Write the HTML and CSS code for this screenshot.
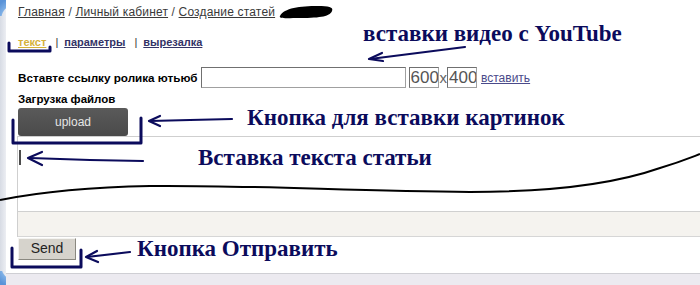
FILE: index.html
```html
<!DOCTYPE html>
<html lang="ru">
<head>
<meta charset="utf-8">
<title>Создание статей</title>
<link rel="stylesheet" href="styles.css">
</head>
<body>
<div class="page">
  <div class="edge"></div>
  <div class="main">
    <div class="content">
      <div class="crumbs"><a href="#">Главная</a> / <a href="#">Личный кабинет</a> / <a href="#">Создание статей</a> <span class="blot"></span></div>
      <div class="tabs"><a class="tab active" href="#">текст</a><span class="sep">|</span><a class="tab" href="#">параметры</a><span class="sep">|</span><a class="tab" href="#">вырезалка</a></div>
      <div class="yt-row">
        <span class="label yt-label">Вставте ссылку ролика ютьюб</span>
        <span class="field url"></span>
        <span class="field size">600</span><span class="x">x</span><span class="field size">400</span>
        <a class="insert" href="#">вставить</a>
      </div>
      <div class="label upl-label">Загрузка файлов</div>
      <div class="upload">upload</div>
    </div>
    <div class="editor">
      <div class="editor-body"></div>
      <div class="editor-bar"></div>
    </div>
    <div class="content send-row">
      <div class="send">Send</div>
    </div>
    <div class="footer"></div>
  </div>
</div>

<div class="note note-video">вставки видео с YouTube</div>
<div class="note note-upload">Кнопка для вставки картинок</div>
<div class="note note-text">Вставка текста статьи</div>
<div class="note note-send">Кнопка Отправить</div>

<svg class="marks" width="700" height="285" viewBox="0 0 700 285">
  <path d="M280 16 C284 8 300 6 318 6 C328 6 334 7 332 11 C330 16 322 18 300 18 C288 18 278 19 280 16 Z" fill="#000"/>
  <g fill="none" stroke="#0b0b5c" stroke-width="3" stroke-linecap="round" stroke-linejoin="round">
    <path d="M9 43 V51 H50 V47"/>
    <path d="M13 120 V143 H141 V118"/>
    <path d="M12 248 V267 H81 V250"/>
  </g>
  <g fill="none" stroke="#0b0b5c" stroke-width="2.2" stroke-linecap="round" stroke-linejoin="round">
    <path d="M465 47 L370 59"/>
    <path d="M382 53 L369 59 L383 61"/>
    <path d="M232 119 L190 120 L150 121"/>
    <path d="M160 116 L149 121 L160 126"/>
    <path d="M143 161 L90 160 L30 158"/>
    <path d="M42 152 L28 158 L42 165"/>
    <path d="M130 252 L87 257"/>
    <path d="M97 251 L86 257 L98 262"/>
  </g>
  <path d="M20 150 V165" stroke="#111" stroke-width="1.5"/>
  <path d="M0 200 C40 192 90 187 150 186 C250 185 350 191 470 192 C560 192 620 182 660 168 C680 162 692 157 700 154" fill="none" stroke="#000" stroke-width="2"/>
</svg>
</body>
</html>
```
FILE: styles.css
```css
html, body {
  margin: 0;
  padding: 0;
  width: 700px;
  height: 285px;
  overflow: hidden;
  background: #fff;
}
body {
  position: relative;
  font-family: "Liberation Sans", Arial, sans-serif;
  color: #000;
}
.page {
  display: flex;
  height: 285px;
}
.edge {
  width: 6px;
  flex: none;
  background:
    radial-gradient(circle at 14px 18px, transparent 12px, #7fb0e6 13px, #5a93d8 20px) top left / 8px 16px no-repeat,
    radial-gradient(circle at 14px -4px, transparent 12px, #7fb0e6 13px, #5a93d8 20px) bottom left / 8px 14px no-repeat,
    linear-gradient(to right, #d7dbe4, #eceef3);
}
.main {
  flex: 1;
  display: flex;
  flex-direction: column;
  min-width: 0;
}
.content {
  padding-left: 12px;
}
.crumbs {
  font-size: 12px;
  letter-spacing: 0.17px;
  line-height: 16px;
  padding-top: 4px;
  height: 16px;
  color: #444;
  white-space: pre;
}
.crumbs a {
  color: #3a3a3a;
  text-decoration: underline;
}
.blot {
  display: inline-block;
  width: 1px;
}
.tabs {
  margin-top: 15px;
  font-size: 11px;
  font-weight: bold;
  line-height: 14px;
  display: flex;
  align-items: center;
}
.tab {
  color: #333366;
  text-decoration: underline;
}
.tab.active {
  color: #d4b23a;
}
.sep {
  color: #333;
  font-weight: normal;
  padding: 0 6px 0 9px;
}
.yt-row {
  margin-top: 18px;
  display: flex;
  align-items: center;
  height: 21px;
}
.label {
  font-size: 11px;
  font-weight: bold;
  line-height: 13px;
}
.yt-label {
  font-size: 11.7px;
}
.field {
  box-sizing: border-box;
  height: 21px;
  border: 1px solid #a0a0a0;
  border-top-color: #707070;
  border-left-color: #707070;
  background: #fff;
  font-size: 17px;
  line-height: 19px;
  color: #555;
  overflow: hidden;
  white-space: nowrap;
}
.url {
  width: 205px;
  margin-left: 3px;
}
.size {
  width: 30px;
  margin-left: 3px;
  padding-left: 1px;
}
.x {
  font-size: 15px;
  color: #666;
  margin: 0 0 0 1px;
}
.x + .size { margin-left: 0; }
.insert {
  margin-left: 4px;
  font-size: 12px;
  color: #4a4a8a;
  text-decoration: underline;
}
.upl-label {
  margin-top: 5px;
  font-size: 11.5px;
}
.upload {
  margin-top: 2px;
  width: 110px;
  height: 28px;
  border-radius: 3px;
  background: linear-gradient(#5a5a5a, #4a4a4a);
  color: #e6e6e6;
  font-size: 12px;
  line-height: 28px;
  text-align: center;
}
.editor {
  margin-left: 11px;
  border-top: 1px solid #cfcfcf;
  border-left: 1px solid #cfcfcf;
}
.editor-body {
  height: 74px;
  background: #fff;
  border-bottom: 1px solid #d0d0d0;
}
.editor-bar {
  height: 24px;
  background: #f5f3ef;
  border-bottom: 1px solid #d6d6d6;
}
.send-row {
  padding-top: 1px;
  height: 35px;
}
.send {
  box-sizing: border-box;
  width: 58px;
  height: 22px;
  background: #d6d3cc;
  border: 1px solid;
  border-color: #f4f3f0 #8a8880 #8a8880 #f4f3f0;
  font-size: 14px;
  line-height: 19px;
  text-align: center;
  color: #222;
}
.footer {
  flex: 1;
  border-top: 1px solid #cfcfd4;
  background: #eceaf0;
}
.note {
  position: absolute;
  font-family: "Liberation Serif", "Times New Roman", serif;
  font-weight: bold;
  font-size: 23px;
  line-height: 26px;
  color: #0b0b5c;
  white-space: nowrap;
}
.note-video { left: 363px; top: 21px; }
.note-upload { left: 247px; top: 105px; }
.note-text { left: 198px; top: 145px; }
.note-send { left: 137px; top: 236px; }
.marks {
  position: absolute;
  left: 0;
  top: 0;
}
```
